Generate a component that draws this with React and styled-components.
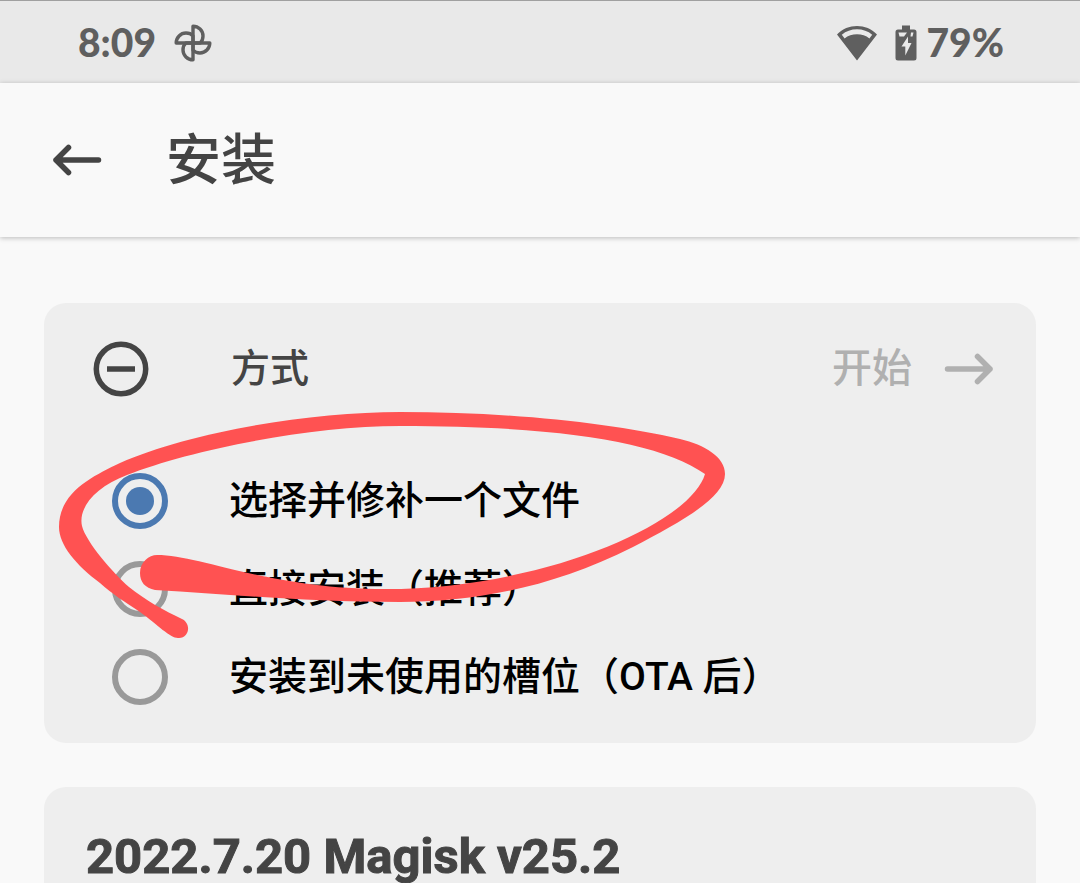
import { useState } from "react";
import styled, { createGlobalStyle } from "styled-components";

const methods = [
    { id: "patch", name: "选择并修补一个文件" },
    { id: "direct", name: "直接安装（推荐）" },
    { id: "slot", name: "安装到未使用的槽位（OTA 后）" },
];

const PinwheelIcon = () => (
    <svg width="38" height="38" viewBox="-19 -19 38 38" fill="none" stroke="currentColor" strokeWidth="3.4" strokeLinejoin="round">
        {[0, 90, 180, 270].map((angle) => (
            <path key={angle} transform={`rotate(${angle})`} d="M0 0V-16.8C5.5-16.8 10-12.4 10-7C10-4 9-1.6 7.2 0Z" />
        ))}
    </svg>
);

const WifiIcon = () => (
    <svg width="40" height="36" viewBox="0 0 40 36" fill="currentColor">
        <path fillRule="evenodd" d="M0 9.5C5.5 3.8 12.5 1 20 1S34.5 3.8 40 9.5L20 35.5ZM4.8 9.8L7.6 13.4C11 10.8 15.4 9.3 20 9.3S29 10.8 32.4 13.4L35.2 9.8C31 6.2 25.7 4.3 20 4.3S9 6.2 4.8 9.8Z" />
    </svg>
);

const BatteryIcon = () => (
    <svg width="22" height="36" viewBox="0 0 22 36">
        <path fill="currentColor" d="M7 0.5H15V4.5H19Q21.5 4.5 21.5 7V33Q21.5 35.5 19 35.5H3Q0.5 35.5 0.5 33V7Q0.5 4.5 3 4.5H7Z" />
        <path fill="#e9e9e9" d="M3.5 7.5H12L9 11.5H4.5ZM16 7.5H18.5L17.5 11.5H15.5Z" />
        <path fill="#e9e9e9" d="M13 11.5V18H16.5L10.3 30.5V21.5H6.5Z" />
    </svg>
);

const ArrowIcon = ({ right }) => (
    <svg width="50" height="32" viewBox="0 0 50 32" fill="none" stroke="currentColor" strokeWidth="5.5" strokeLinecap="round" strokeLinejoin="round">
        <path d={right ? "M3.5 16H46M33.5 3.5L46 16L33.5 28.5" : "M46.5 16H4M16.5 3.5L4 16L16.5 28.5"} />
    </svg>
);

const MinusCircleIcon = () => (
    <svg width="56" height="56" viewBox="0 0 56 56" fill="none" stroke="currentColor" strokeWidth="5.5">
        <circle cx="28" cy="28" r="24.7" />
        <path d="M14 28H42" />
    </svg>
);

// hand drawn loop around the first option
const MarkerLoop = () => (
    <Marker viewBox="44 303 700 360" aria-hidden="true">
        <path d="M705 474C660 442 560 426 400 426C310 426 190 450 127 475C95 487 78 508 82 526C86 542 113 573 129 587C145 600 165 611 182 619C192 624 189 639 178 638C170 638 158 625 140 612C125 602 112 594 100 583C76 565 59 545 59 527C59 492 93 476 120 463C190 432 310 412 400 412C510 412 610 423 680 439C705 445 725 457 725 474C725 498 679 523 633 547C550 589 470 602 400 602C300 602 230 594 155 590C145 588 140 582 140 573C140 562 149 555 157 555C200 555 270 589 385 589C540 589 690 525 705 474Z" />
    </Marker>
);

const App = () => {

    const [selected, setSelected] = useState("patch");

    return (
        <>
            <GlobalStyle />
            <Page>
                <StatusBar>
                    <StatusGroup $gap={18}>
                        <span>8:09</span>
                        <PinwheelIcon />
                    </StatusGroup>
                    <StatusGroup $gap={18}>
                        <WifiIcon />
                        <StatusGroup $gap={10}>
                            <BatteryIcon />
                            <span>79%</span>
                        </StatusGroup>
                    </StatusGroup>
                </StatusBar>
                <Toolbar>
                    <IconButton aria-label="返回"><ArrowIcon /></IconButton>
                    <Title>安装</Title>
                </Toolbar>
                <Content>
                    <Card>
                        <CardHeader>
                            <IconButton aria-label="收起"><MinusCircleIcon /></IconButton>
                            <CardTitle>方式</CardTitle>
                            <StartButton disabled>
                                开始
                                <ArrowIcon right />
                            </StartButton>
                        </CardHeader>
                        <Options>
                            {methods.map((el) => (
                                <Option key={el.id}>
                                    <Radio
                                        name="method"
                                        checked={selected === el.id}
                                        onChange={() => setSelected(el.id)}
                                    />
                                    {el.name}
                                </Option>
                            ))}
                        </Options>
                        <MarkerLoop />
                    </Card>
                    <Card>
                        <ReleaseTitle>2022.7.20 Magisk v25.2</ReleaseTitle>
                    </Card>
                </Content>
            </Page>
        </>
    );
};

const GlobalStyle = createGlobalStyle`
  * {
    box-sizing: border-box;
  }

  body {
    margin: 0;
    background-color: #f9f9f9;
    color: #444444;
    font-family: Roboto, "Noto Sans CJK SC", sans-serif;
  }

  svg {
    display: block;
    flex: none;
  }
`;

const Page = styled.div`
  display: flex;
  flex-direction: column;
  height: 100vh;
  overflow: hidden;
`;

const StatusBar = styled.div`
  display: flex;
  flex: none;
  justify-content: space-between;
  align-items: center;
  height: 83px;
  padding: 2px 76px 0 78px;
  border-top: 1px solid #a0a0a0;
  background-color: #e9e9e9;
  color: #5f5f5f;
  font-family: Lato, sans-serif;
  font-size: 39px;
  font-weight: 900;
  line-height: 48px;

  span {
    padding-bottom: 2px;
  }
`;

const StatusGroup = styled.div`
  display: flex;
  align-items: center;
  gap: ${(props) => props.$gap}px;
`;

const Toolbar = styled.header`
  display: flex;
  flex: none;
  align-items: center;
  gap: 64px;
  height: 154px;
  padding: 0 52px;
  box-shadow: 0 1px 5px rgba(0, 0, 0, 0.25);
`;

const IconButton = styled.button`
  padding: 0;
  border: none;
  background: none;
  color: inherit;
`;

const Title = styled.h1`
  margin: 0;
  font-size: 55px;
  font-weight: 500;
  line-height: 64px;
`;

const Content = styled.main`
  display: flex;
  flex-direction: column;
  gap: 44px;
  padding: 66px 44px;
`;

const Card = styled.section`
  position: relative;
  flex: none;
  border-radius: 22px;
  background-color: #eeeeee;
`;

const CardHeader = styled.div`
  display: flex;
  align-items: center;
  height: 132px;
  padding: 0 42px 0 49px;
`;

const CardTitle = styled.h2`
  flex: 1;
  margin: 0 0 0 82px;
  font-size: 39px;
  font-weight: 500;
  line-height: 48px;
`;

const StartButton = styled.button`
  display: flex;
  align-items: center;
  gap: 32px;
  padding: 0;
  border: none;
  background: none;
  color: #b0b0b0;
  font-family: inherit;
  font-size: 40px;
  font-weight: 500;
  line-height: 48px;
`;

const Options = styled.div`
  padding: 22px 68px;
`;

const Option = styled.label`
  display: flex;
  align-items: center;
  gap: 61px;
  height: 88px;
  color: #000000;
  font-size: 39px;
  font-weight: 500;
  line-height: 48px;
`;

const Radio = styled.input.attrs({ type: "radio" })`
  appearance: none;
  display: grid;
  place-items: center;
  flex: none;
  width: 56px;
  height: 56px;
  margin: 0;
  border: 6px solid #999999;
  border-radius: 50%;

  &:checked {
    border-color: #4b79b1;
  }

  &:checked::before {
    content: "";
    width: 28px;
    height: 28px;
    border-radius: 50%;
    background-color: #4b79b1;
  }
`;

const Marker = styled.svg`
  position: absolute;
  top: 0;
  left: 0;
  width: 700px;
  height: 360px;
  fill: #ff5252;
  pointer-events: none;
`;

const ReleaseTitle = styled.h2`
  margin: 0;
  padding: 40px 42px;
  font-size: 49px;
  font-weight: 700;
  line-height: 60px;
  -webkit-text-stroke: 1px currentColor;
`;

export default App;
